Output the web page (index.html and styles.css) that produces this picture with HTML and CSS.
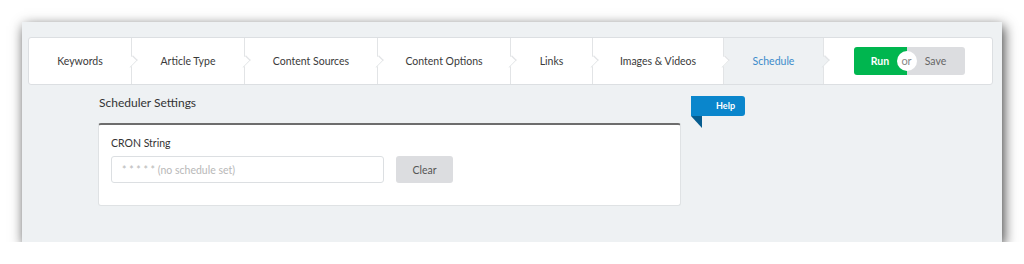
FILE: index.html
```html
<!doctype html>
<html>
    <head>
        <title>Scheduler Settings</title>
        <meta charset="utf-8">
        <link rel="stylesheet" href="styles.css">
    </head>
    <body>
        <div class="shot">
            <div class="panel">
                <div class="steps">
                    <div class="step" style="width: 103px">Keywords</div>
                    <div class="step" style="width: 113px">Article Type</div>
                    <div class="step" style="width: 133px">Content Sources</div>
                    <div class="step" style="width: 133px">Content Options</div>
                    <div class="step" style="width: 82px">Links</div>
                    <div class="step" style="width: 131px">Images &amp; Videos</div>
                    <div class="step active" style="width: 100px">Schedule</div>
                    <div class="actions">
                        <div class="run-save">
                            <span class="btn run">Run</span>
                            <span class="or">or</span>
                            <span class="btn save">Save</span>
                        </div>
                    </div>
                </div>
                <div class="content">
                    <div class="settings">
                        <h2>Scheduler Settings</h2>
                        <div class="card">
                            <label class="field-label">CRON String</label>
                            <div class="field-row">
                                <input type="text" class="cron" placeholder="* * * * * (no schedule set)">
                                <span class="btn clear">Clear</span>
                            </div>
                        </div>
                    </div>
                    <div class="help">Help</div>
                </div>
            </div>
        </div>
    </body>
</html>
```

FILE: styles.css
```css
body {
    margin: 0;
    background: #fff;
    font: 10.5px 'Lato', 'Liberation Sans', sans-serif;
    color: #333;
}

.shot {
    padding: 22px 0 0 22px;
}

.panel {
    width: 980px;
    height: 220px;
    background: #eef1f3;
    box-shadow: 2px 4px 12px rgba(0, 0, 0, 0.75);
    padding: 15px 0 0 6px;
    box-sizing: border-box;
}

.steps {
    display: flex;
    width: 965px;
    height: 48px;
    box-sizing: border-box;
    background: #fff;
    border: 1px solid #dcdfe2;
    border-radius: 3px;
}

.step {
    position: relative;
    display: flex;
    align-items: center;
    justify-content: center;
    box-sizing: border-box;
    border-right: 1px solid #e2e4e6;
    color: #3a3a3a;
}

.step::after {
    content: "";
    position: absolute;
    right: -5px;
    top: 50%;
    width: 8px;
    height: 8px;
    margin-top: -4px;
    background: #fff;
    border-top: 1px solid #e2e4e6;
    border-right: 1px solid #e2e4e6;
    transform: rotate(45deg) scale(0.75, 1.2);
    z-index: 1;
}

.step:first-child {
    border-radius: 3px 0 0 3px;
}

.step.active {
    background: #eef1f3;
    color: #3b8bca;
}

.step.active::after {
    background: #eef1f3;
}

.actions {
    flex: 1;
    display: flex;
    align-items: center;
    justify-content: center;
    padding-left: 2px;
}

.run-save {
    display: flex;
    align-items: center;
    position: relative;
}

.btn {
    display: flex;
    align-items: center;
    justify-content: center;
    height: 28px;
    border-radius: 3px;
}

.run {
    width: 53px;
    background: #00b64f;
    color: #fff;
    font-weight: bold;
    border-radius: 3px 0 0 3px;
}

.save {
    width: 58px;
    background: #dcdde0;
    color: #666;
    border-radius: 0 3px 3px 0;
}

.or {
    position: absolute;
    left: 43px;
    top: 4px;
    width: 20px;
    height: 20px;
    line-height: 19px;
    border-radius: 50%;
    background: #fff;
    color: #888;
    text-align: center;
    font-size: 11px;
}

.content {
    display: flex;
    padding: 11px 0 0 70px;
}

.settings {
    width: 583px;
}

h2 {
    margin: 0 0 13px 1px;
    font-size: 12px;
    font-weight: normal;
    line-height: 14px;
    color: #333;
}

.card {
    box-sizing: border-box;
    height: 83px;
    background: #fff;
    border: 1px solid #dfe2e4;
    border-top: 2px solid #6d6d6d;
    border-radius: 3px;
    padding: 12px 12px 0 12px;
}

.field-label {
    display: block;
    font-size: 10.5px;
    color: #333;
    line-height: 12px;
    margin-bottom: 7px;
}

.field-row {
    display: flex;
    gap: 12px;
}

.cron {
    width: 273px;
    height: 27px;
    box-sizing: border-box;
    border: 1px solid #dcdfe2;
    border-radius: 3px;
    padding: 0 10px;
    font: 10.5px 'Lato', 'Liberation Sans', sans-serif;
    outline: none;
}

.cron::placeholder {
    color: #b8b8b8;
}

.clear {
    width: 57px;
    height: 27px;
    background: #dcdde0;
    color: #555;
}

.help {
    position: relative;
    margin: 0 0 0 10px;
    width: 54px;
    height: 20px;
    box-sizing: border-box;
    padding-right: 10px;
    background: #0a86cc;
    color: #fff;
    font-weight: bold;
    font-size: 9px;
    line-height: 20px;
    text-align: right;
    border-radius: 0 3px 3px 0;
}

.help::after {
    content: "";
    position: absolute;
    left: 0;
    top: 20px;
    border-top: 12px solid #075d8f;
    border-left: 11px solid transparent;
}
```
